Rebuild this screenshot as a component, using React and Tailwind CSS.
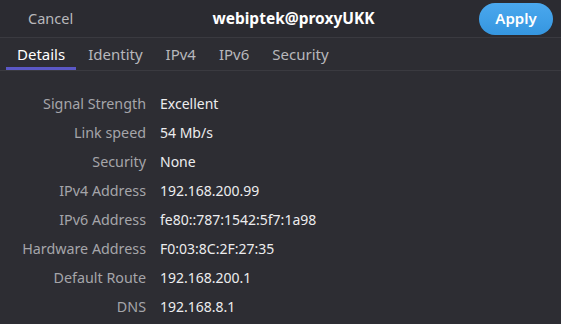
import React from 'react';

const rows = [
  ['Signal Strength', 'Excellent'],
  ['Link speed', '54 Mb/s'],
  ['Security', 'None'],
  ['IPv4 Address', '192.168.200.99'],
  ['IPv6 Address', 'fe80::787:1542:5f7:1a98'],
  ['Hardware Address', 'F0:03:8C:2F:27:35'],
  ['Default Route', '192.168.200.1'],
  ['DNS', '192.168.8.1'],
];

const tabs = ['Details', 'Identity', 'IPv4', 'IPv6', 'Security'];

export default function App() {
  return (
    <div
      className="w-[561px] h-[324px] bg-[#2d2d33] text-[#e6e6e8] overflow-hidden"
      style={{ fontFamily: '"Noto Sans", "Open Sans", sans-serif' }}
    >
      {/* Header bar */}
      <div className="h-[38px] grid grid-cols-[1fr_auto_1fr] items-center pl-[28px] pr-[8px] bg-[#2b2b31] border-b border-[#3a3a40]">
        <span className="text-[14.5px] text-[#b8b8bc]">Cancel</span>
        <span className="text-[15.5px] font-bold text-white ml-[6px]">webiptek@proxyUKK</span>
        <div className="flex justify-end">
          <button className="w-[74px] h-[32px] rounded-full bg-gradient-to-b from-[#4aa8ee] to-[#3596e0] text-white text-[15px] font-semibold">
            Apply
          </button>
        </div>
      </div>

      {/* Tabs */}
      <div className="h-[33px] flex items-stretch gap-[1px] px-[6px] border-b border-[#3a3a40]">
        {tabs.map((t, i) => (
          <div
            key={t}
            className={`flex items-center px-[11px] text-[15px] border-b-[3px] ${
              i === 0 ? 'border-[#5b58c6] text-white' : 'border-transparent text-[#b8b8bc]'
            }`}
          >
            <span className="pt-[3px]">{t}</span>
          </div>
        ))}
      </div>

      {/* Detail rows */}
      <div className="pt-[18px] flex flex-col">
        {rows.map(([label, value]) => (
          <div key={label} className="h-[29px] flex items-center">
            <span className="w-[146px] text-right text-[14.3px] text-[#a5a5aa]">{label}</span>
            <span className="ml-[14px] text-[14px] text-[#ececee]">{value}</span>
          </div>
        ))}
      </div>
    </div>
  );
}
